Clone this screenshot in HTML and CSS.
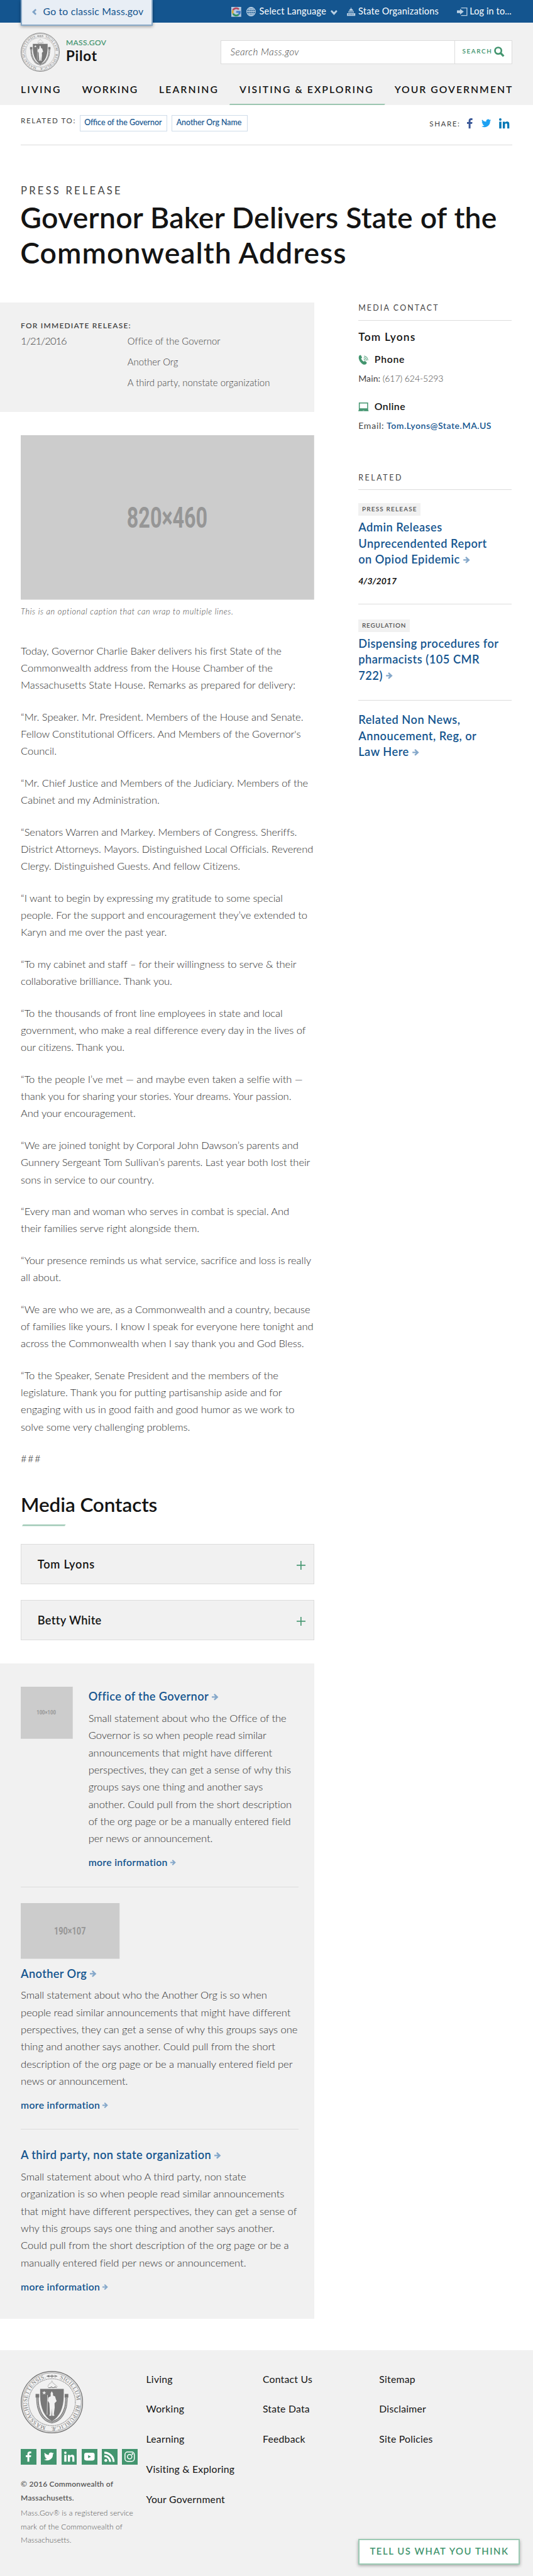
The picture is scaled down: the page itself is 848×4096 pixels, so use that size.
FILE: index.html
```html
<!DOCTYPE html>
<html lang="en">
<head>
<meta charset="utf-8">
<title>Governor Baker Delivers State of the Commonwealth Address</title>
<link rel="stylesheet" href="styles.css">
</head>
<body>
<svg width="0" height="0" class="defs">
  <defs>
    <symbol id="arrow" viewBox="0 0 13 13"><path d="M0 5.100h6.700L3.700 2 5.600 0l7 6.500-7 6.500-1.900-2 3-3.100H0z" fill="currentColor"/></symbol>
    <symbol id="fb" viewBox="0 0 20 20"><path d="M11.600 20v-9h3.100l.5-3.600h-3.600V5.200c0-1 .3-1.700 1.800-1.700h1.900V.2C15 .1 13.900 0 12.700 0 9.900 0 8 1.700 8 4.700v2.700H4.800V11H8v9z" fill="currentColor"/></symbol>
    <symbol id="tw" viewBox="0 0 24 20"><path d="M24 2.400c-.9.400-1.800.700-2.800.8 1-.6 1.800-1.600 2.200-2.700-1 .6-2 1-3.100 1.200A4.900 4.900 0 0 0 11.900 6.200C7.800 6 4.200 4 1.700.9.400 3.200 1 6 3.200 7.500c-.8 0-1.600-.2-2.200-.6 0 2.300 1.600 4.400 3.900 4.900-.7.200-1.500.200-2.200.1.600 2 2.400 3.400 4.600 3.400A9.900 9.900 0 0 1 0 17.300 14 14 0 0 0 21.500 4.900c1-.7 1.800-1.600 2.500-2.500z" fill="currentColor"/></symbol>
    <symbol id="li" viewBox="0 0 20 20"><path d="M.3 6.600h4.200V20H.3zM2.400 0a2.400 2.400 0 1 1 0 4.800 2.400 2.400 0 0 1 0-4.800zM7.200 6.600h4v1.900c.6-1.100 2-2.200 4-2.200 4.200 0 4.800 2.800 4.800 6.300V20h-4.200v-6.500c0-1.600 0-3.600-2.200-3.600s-2.300 1.700-2.300 3.500V20H7.200z" fill="currentColor"/></symbol>
    <symbol id="seal" viewBox="0 0 120 120">
      <g fill="none" stroke="#787878">
        <circle cx="60" cy="60" r="59" stroke-width="1.700"/>
        <circle cx="60" cy="60" r="56.500" stroke-width=".8"/>
        <circle cx="60" cy="60" r="45" stroke-width="1.300" stroke-dasharray="1.100 .8"/>
      </g>
      <path id="ring" d="M60 12.500A47.500 47.500 0 1 1 59.900 12.500" fill="none"/>
      <g class="seal-text">
        <text><textPath href="#ring" startOffset="15" textLength="56">SIGILLUM</textPath></text>
        <text><textPath href="#ring" startOffset="79" textLength="71">REIPUBLICÆ</textPath></text>
        <text><textPath href="#ring" startOffset="160" textLength="126">MASSACHUSETTENSIS.</textPath></text>
      </g>
      <path d="M49 10l6-2.500v5zM71 10l-6-2.500v5zM53 9.500h14v1H53z" fill="#787878"/>
      <circle cx="60" cy="10" r="2" fill="none" stroke="#787878" stroke-width="1.200"/>
      <path d="M52 31q1-6 6-8l2-4 2 4q5 4 9 8" fill="none" stroke="#c4c4c4" stroke-width="1.400"/>
      <path d="M53 32h4l2-1.500 2 1.500h3l2-1.500 3 1.500" fill="none" stroke="#787878" stroke-width="1.300"/>
      <path d="M37.300 34.500h45.400v12C82.700 71 75 88 60 96.500 45 88 37.300 71 37.300 46.500z" fill="#787878"/>
      <path d="M32 46q0 20 3 27 7 22 25 25.500Q78 95 85 73q3-7 3-27" fill="none" stroke="#787878" stroke-width="4.600"/>
      <path d="M32 50q0 16 3 23 7 22 25 25.500Q78 95 85 73q3-7 3-23" fill="none" stroke="#d6d6d6" stroke-width="2" stroke-dasharray="1.500 1.100"/>
      <path d="M28.500 44h7v7h-7zM84.500 44h7v7h-7z" fill="#787878"/>
      <path d="M45 38l1 2.700h2.900l-2.300 1.800.9 2.800-2.500-1.700-2.500 1.700.9-2.800-2.300-1.800H44z" fill="#f1f1f1"/>
      <path d="M57.500 43l2-4 2.500 4v4l4 2 1.500 5 1.500 4-4 4 .3 8-1.800 14h1v2h-4l-.5-14-1 14h-4v-2h1.300l-1.300-22-3-5 1-6 4.500-2.500z" fill="#f1f1f1"/>
      <path d="M51.500 46l-.8 38" stroke="#f1f1f1" stroke-width=".9"/>
    </symbol>
  </defs>
</svg>
<div class="page">

<div class="topbar">
  <a class="classic"><svg width="9" height="12" viewBox="0 0 9 12"><path d="M8.500 2.400 5 6l3.500 3.600L6.400 12 0 6 6.400 0z" fill="#7ea2c6"/></svg><span>Go to classic Mass.gov</span></a>
  <div class="utility">
    <svg class="google" width="19" height="19" viewBox="0 0 19 19"><rect width="19" height="19" fill="#b6cbe0"/><g fill="none" stroke-width="3.400"><path d="M14.600 4.700A7 7 0 0 0 3.300 6.300" stroke="#b5485d"/><path d="M3.300 6.300a7 7 0 0 0 0 6.600" stroke="#d3a63c"/><path d="M3.300 12.900a7 7 0 0 0 11 1.700" stroke="#2f9060"/><path d="M14.300 14.600a7 7 0 0 0 2-5H9.500" stroke="#3f78c8"/></g></svg>
    <svg class="globe" width="18" height="18" viewBox="0 0 18 18" fill="none" stroke="#b9cfe3" stroke-width="1.500"><circle cx="9" cy="9" r="8.200"/><ellipse cx="9" cy="9" rx="4" ry="8.200"/><path d="M9 1v16M1 9h16M2.200 4.800h13.600M2.200 13.200h13.600"/></svg>
    <span class="u-lang">Select Language</span>
    <svg class="u-chev" width="13" height="10" viewBox="0 0 13 10"><path d="M0 2.300 2.200 0l4.300 4.300L10.800 0 13 2.300 6.500 9.700z" fill="#b9cfe3"/></svg>
    <svg class="u-cap" width="16" height="16" viewBox="0 0 16 16"><path d="M7.500 0h1v2q3 .8 3.500 4H4q.5-3.200 3.500-4zM3 7h10v3H3zM0 11h16v5H0z" fill="#b9cfe3"/><path d="M5 8h1.200v2H5zM7.500 8h1.200v2H7.500zM10 8h1.200v2H10zM2 12.500h1.500v1.500H2zM5 12.500h1.500v1.500H5zM8 12.500h1.500v1.500H8zM11 12.500h1.500v1.500H11z" fill="#14558f"/></svg>
    <span class="u-org">State Organizations</span>
    <svg class="u-login" width="20" height="16" viewBox="0 0 20 16"><path d="M0 5.500h6V2.300L13 8l-7 5.700v-3.200H0z" fill="#b9cfe3"/><path d="M8 .8h11.200v14.400H8" fill="none" stroke="#b9cfe3" stroke-width="1.600"/></svg>
    <span class="u-log">Log in to...</span>
  </div>
</div>

<header class="header">
  <div class="brand-row">
    <svg width="75" height="75"><use href="#seal"/></svg>
    <div class="brand"><div class="brand-top">MASS.GOV</div><div class="brand-name">Pilot</div></div>
    <div class="search"><div class="search-input">Search Mass.gov</div><div class="search-btn"><span>SEARCH</span><svg width="20" height="20" viewBox="0 0 20 20"><circle cx="8" cy="8" r="6.200" fill="none" stroke="#43956f" stroke-width="3.200"/><path d="M12.300 12.300 18.500 18.500" stroke="#43956f" stroke-width="4"/></svg></div></div>
  </div>
  <nav class="nav">
    <a class="n1">LIVING</a><a class="n2">WORKING</a><a class="n3">LEARNING</a><a class="active">VISITING &amp; EXPLORING</a><a class="n5">YOUR GOVERNMENT</a>
  </nav>
</header>

<div class="related-bar">
  <span class="rel-label">RELATED TO:</span>
  <a class="tag tag-1">Office of the Governor</a><a class="tag tag-2">Another Org Name</a>
  <div class="share"><span>SHARE:</span>
    <svg class="s-fb" width="20" height="20"><use href="#fb"/></svg>
    <svg class="s-tw" width="18.500" height="17"><use href="#tw"/></svg>
    <svg class="s-li" width="20" height="20"><use href="#li"/></svg>
  </div>
</div>

<div class="kicker">PRESS RELEASE</div>
<h1>Governor Baker Delivers State of the<br><span>Commonwealth Address</span></h1>

<div class="columns">
<main>
  <section class="release">
    <div class="release-label">FOR IMMEDIATE RELEASE:</div>
    <div class="release-row"><div class="release-date">1/21/2016</div><div class="release-orgs">Office of the Governor<br>Another Org<br>A third party, nonstate organization</div></div>
  </section>
  <article>
    <svg class="photo" width="564" height="316"><rect width="564" height="316" fill="#ccc"/><text x="204" y="177.500" font-size="55" textLength="155" lengthAdjust="spacingAndGlyphs">820×460</text></svg>
    <div class="caption">This is an optional caption that can wrap to multiple lines.</div>
    <div class="body">
<p>Today, Governor Charlie Baker delivers his first State of the<br>Commonwealth address from the House Chamber of the<br>Massachusetts State House. Remarks as prepared for delivery:</p>
<p>“Mr. Speaker. Mr. President. Members of the House and Senate.<br>Fellow Constitutional Officers. And Members of the Governor's<br>Council.</p>
<p>“Mr. Chief Justice and Members of the Judiciary. Members of the<br>Cabinet and my Administration.</p>
<p>“Senators Warren and Markey. Members of Congress. Sheriffs.<br>District Attorneys. Mayors. Distinguished Local Officials. Reverend<br>Clergy. Distinguished Guests. And fellow Citizens.</p>
<p>“I want to begin by expressing my gratitude to some special<br>people. For the support and encouragement they’ve extended to<br>Karyn and me over the past year.</p>
<p>“To my cabinet and staff – for their willingness to serve &amp; their<br>collaborative brilliance. Thank you.</p>
<p>“To the thousands of front line employees in state and local<br>government, who make a real difference every day in the lives of<br>our citizens. Thank you.</p>
<p>“To the people I’ve met — and maybe even taken a selfie with —<br>thank you for sharing your stories. Your dreams. Your passion.<br>And your encouragement.</p>
<p>“We are joined tonight by Corporal John Dawson’s parents and<br>Gunnery Sergeant Tom Sullivan’s parents. Last year both lost their<br>sons in service to our country.</p>
<p>“Every man and woman who serves in combat is special. And<br>their families serve right alongside them.</p>
<p>“Your presence reminds us what service, sacrifice and loss is really<br>all about.</p>
<p>“We are who we are, as a Commonwealth and a country, because<br>of families like yours. I know I speak for everyone here tonight and<br>across the Commonwealth when I say thank you and God Bless.</p>
<p>“To the Speaker, Senate President and the members of the<br>legislature. Thank you for putting partisanship aside and for<br>engaging with us in good faith and good humor as we work to<br>solve some very challenging problems.</p>
<p class="hashes">###</p>
    </div>
    <h2>Media Contacts</h2>
    <svg class="h2-rule" width="84" height="3"><path d="M2 0h82l-2 3H0z" fill="#a0cab6"/></svg>
    <div class="accordion"><span class="ac-1">Tom Lyons</span><i class="plus"></i></div>
    <div class="accordion"><span class="ac-2">Betty White</span><i class="plus"></i></div>
  </article>
  <section class="orgs">
    <div class="org org-side">
      <svg class="thumb" width="100" height="100"><rect width="100" height="100" fill="#ccc"/><text x="30.500" y="53" font-size="10" textLength="37" lengthAdjust="spacingAndGlyphs">100×100</text></svg>
      <div>
        <h3>Office of the Governor<svg width="13" height="13"><use href="#arrow"/></svg></h3>
        <p>Small statement about who the Office of the<br>Governor is so when people read similar<br>announcements that might have different<br>perspectives, they can get a sense of why this<br>groups says one thing and another says<br>another. Could pull from the short description<br>of the org page or be a manually entered field<br>per news or announcement.</p>
        <a class="more">more information<svg width="11" height="11"><use href="#arrow"/></svg></a>
      </div>
    </div>
    <div class="org org-stack">
      <svg class="thumb" width="190" height="107"><rect width="190" height="107" fill="#ccc"/><text x="64" y="60" font-size="19" textLength="61" lengthAdjust="spacingAndGlyphs">190×107</text></svg>
      <h3>Another Org<svg width="13" height="13"><use href="#arrow"/></svg></h3>
      <p>Small statement about who the Another Org is so when<br>people read similar announcements that might have different<br>perspectives, they can get a sense of why this groups says one<br>thing and another says another. Could pull from the short<br>description of the org page or be a manually entered field per<br>news or announcement.</p>
      <a class="more">more information<svg width="11" height="11"><use href="#arrow"/></svg></a>
    </div>
    <div class="org org-last">
      <h3>A third party, non state organization<svg width="13" height="13"><use href="#arrow"/></svg></h3>
      <p>Small statement about who A third party, non state<br>organization is so when people read similar announcements<br>that might have different perspectives, they can get a sense of<br>why this groups says one thing and another says another.<br>Could pull from the short description of the org page or be a<br>manually entered field per news or announcement.</p>
      <a class="more">more information<svg width="11" height="11"><use href="#arrow"/></svg></a>
    </div>
  </section>
</main>

<aside>
  <div class="side-head">MEDIA CONTACT</div>
  <div class="person">Tom Lyons</div>
  <div class="method"><svg width="19" height="20" viewBox="0 0 19 20"><path d="M1.500 1.500 4.300.6l2.600 4.800-2 1.800q1.500 4 5.300 6.200l2-1.700 3.800 3.400-1 2.500q-2.500 2.400-6 1Q2 15 .4 7 0 3.500 1.500 1.500z" fill="#43956f"/><path d="M10 8.500a3 3 0 0 1 2.500 3M10 5.500a6 6 0 0 1 5.300 6M10.500 2.500a8.500 8.500 0 0 1 7.500 8.500" fill="none" stroke="#6fae90" stroke-width="1.500"/></svg><span>Phone</span></div>
  <div class="detail"><span class="main">Main:</span> <span class="num">(617) 624-5293</span></div>
  <div class="method online"><svg width="20" height="17" viewBox="0 0 20 17"><path d="M2 1h16v11H2z" fill="#fff" stroke="#43956f" stroke-width="1.800"/><path d="M1.500 12.500h17L20 16.500H0z" fill="#43956f"/><path d="M8.500 15h3v1.500h-3z" fill="#a0cab6"/></svg><span>Online</span></div>
  <div class="detail"><span class="em">Email:</span> <a>Tom.Lyons@State.MA.US</a></div>
  <div class="side-head second">RELATED</div>
  <div class="item"><div class="badge">PRESS RELEASE</div>
    <h4>Admin Releases<br>Unprecendented Report<br>on Opiod Epidemic<svg width="13.500" height="13"><use href="#arrow"/></svg></h4>
    <div class="date">4/3/2017</div></div>
  <div class="item item-2"><div class="badge badge-2">REGULATION</div>
    <h4>Dispensing procedures for<br>pharmacists (105 CMR<br>722)<svg width="13.500" height="13"><use href="#arrow"/></svg></h4></div>
  <div class="item item-3"><h4>Related Non News,<br>Annoucement, Reg, or<br>Law Here<svg width="13.500" height="13"><use href="#arrow"/></svg></h4></div>
</aside>
</div>

<footer class="footer">
  <div class="f-brand">
    <svg class="f-seal" width="120" height="120"><use href="#seal"/></svg>
    <div class="social">
      <a><svg width="20" height="20"><use href="#fb"/></svg></a>
      <a><svg width="19" height="17"><use href="#tw"/></svg></a>
      <a><svg width="20" height="20"><use href="#li"/></svg></a>
      <a><svg width="20" height="15" viewBox="0 0 20 15"><rect width="20" height="15" rx="4" fill="#fff"/><path d="M7.500 4.500v6L13 7.500z" fill="#43956f"/></svg></a>
      <a><svg width="20" height="20" viewBox="0 0 20 20"><circle cx="2.800" cy="17.200" r="2.800" fill="#fff"/><path d="M0 8.800A11.200 11.200 0 0 1 11.200 20M0 2.200A17.800 17.800 0 0 1 17.800 20" fill="none" stroke="#fff" stroke-width="3.800"/></svg></a>
      <a><svg width="20" height="20" viewBox="0 0 20 20" fill="none" stroke="#fff" stroke-width="1.800"><rect x="1" y="1" width="18" height="18" rx="5"/><circle cx="10" cy="10" r="4.300"/><circle cx="15.400" cy="4.700" r=".7"/></svg></a>
    </div>
    <div class="copy">© 2016 Commonwealth of<br>Massachusetts.</div>
    <div class="legal">Mass.Gov® is a registered service<br>mark of the Commonwealth of<br>Massachusetts.</div>
  </div>
  <div class="f-col c1">Living<br>Working<br>Learning<br>Visiting &amp; Exploring<br>Your Government</div>
  <div class="f-col c2">Contact Us<br>State Data<br>Feedback</div>
  <div class="f-col c3">Sitemap<br>Disclaimer<br>Site Policies</div>
  <a class="feedback">TELL US WHAT YOU THINK</a>
</footer>
</div>
</body>
</html>
```
FILE: styles.css
```css
* { box-sizing: border-box; }
body { margin: 0; height: 4096px; overflow: hidden; background: #fff; }
.defs { position: absolute; }
.page { zoom: .8276; width: 1024.6px; height: 4950px; overflow: hidden; font-family: Lato, "Open Sans", sans-serif; color: #141414; white-space: nowrap; }
svg { display: block; flex: none; overflow: visible; }
p, h1, h2, h3, h4 { margin: 0; }

.seal-text text { font: 11px "Liberation Serif", serif; fill: #787878; }

/* Utility bar */
.topbar { display: flex; height: 43px; background: #14558f; }
.classic { position: relative; z-index: 2; display: flex; margin-left: 40px; width: 254px; height: 49px; border: 3px solid #8aaac8; border-top: 0; background: #e8eef5; padding-left: 19px; color: #14558f; font-size: 19px; line-height: 44px; letter-spacing: .25px; box-shadow: 0 3px 6px rgba(0,0,0,.35); }
.classic svg { margin-top: 17px; margin-right: 12.5px; }
.utility { display: flex; margin-left: 151px; color: #fff; font-size: 17.5px; line-height: 44px; }
.google { margin-top: 13px; }
.globe { margin: 13px 6.5px 0 10px; }
.u-lang { width: 137.5px; letter-spacing: .3px; }
.u-chev { margin-top: 19px; }
.u-cap { margin: 15px 6px 0 18px; }
.u-org { width: 190px; letter-spacing: .25px; }
.u-login { margin: 15px 4px 0 0; }
.u-log { letter-spacing: .15px; }

/* Header */
.header { height: 159px; background: #f1f1f1; padding: 20px 40px 0; }
.brand-row { display: flex; height: 75px; }
.brand { margin: 11px 0 0 12px; }
.brand-top { font-size: 14.5px; line-height: 18px; letter-spacing: .45px; color: #43956f; -webkit-text-stroke: .25px #43956f; }
.brand-name { margin-top: 2px; font-size: 27px; font-weight: 700; line-height: 26px; letter-spacing: .9px; }
.search { display: flex; width: 560px; height: 46px; margin: 14px 0 0 auto; border: 2px solid #dcdcdc; background: #fff; }
.search-input { width: 449px; border-right: 2px solid #dcdcdc; padding-left: 17px; font-size: 18.5px; font-style: italic; font-weight: 300; line-height: 43px; letter-spacing: .5px; color: #444; }
.search-btn { display: flex; padding-left: 14px; font-size: 12px; font-weight: 600; line-height: 41px; letter-spacing: 1.9px; color: #43956f; }
.search-btn span { width: 61px; }
.search-btn svg { margin-top: 11px; }
.nav { display: flex; justify-content: space-between; margin-top: 21px; height: 43px; font-size: 19px; font-weight: 600; line-height: 24px; letter-spacing: 2.5px; }
.nav .n1, .nav .n3 { letter-spacing: 2.6px; }
.nav .n2 { letter-spacing: 2.1px; }
.nav .n5 { letter-spacing: 2.45px; margin-right: -2px; }
.active { position: relative; }
.active::after { content: ""; position: absolute; left: -20px; right: -22px; bottom: 0; height: 3px; background: #9bc5b0; clip-path: polygon(2px 0, 100% 0, calc(100% - 2px) 100%, 0 100%); }

.related-bar { display: flex; height: 77px; margin: 0 40px; padding-top: 19px; border-bottom: 1px solid #dcdcdc; }
.rel-label { width: 113px; padding-top: 1px; font-size: 14px; line-height: 20px; letter-spacing: 1.9px; color: #444; }
.tag { height: 32px; border: 2px solid #cfdce9; padding-left: 8px; font-size: 15px; line-height: 27px; color: #14558f; -webkit-text-stroke: .2px #14558f; }
.tag-1 { width: 169px; margin-right: 8px; }
.tag-2 { width: 146px; }
.share { display: flex; margin-left: auto; padding-top: 6px; padding-right: 5px; font-size: 14px; line-height: 22px; letter-spacing: 1.9px; color: #444; }
.s-fb { margin-left: 8px; color: #3b5998; }
.s-tw { margin: 2px 0 0 12px; color: #1da1f2; }
.s-li { margin-left: 16px; color: #0077b5; }

.kicker { margin: 76px 0 0 40px; font-size: 20px; line-height: 24px; letter-spacing: 3.9px; color: #444; }
h1 { margin: 4px 0 62px 39px; font-size: 56px; font-weight: 600; line-height: 68px; letter-spacing: .3px; }
h1 span { letter-spacing: 1.2px; }

.columns { display: flex; height: 3934px; }
main { width: 604px; }
.release { height: 210px; background: #f1f1f1; padding: 36px 0 0 40px; color: #444; }
.release-label { font-size: 14.5px; font-weight: 600; line-height: 18px; letter-spacing: 1.45px; }
.release-row { display: flex; }
.release-date { width: 205px; padding-top: 9.5px; font-size: 20px; font-weight: 300; line-height: 24px; letter-spacing: -1.2px; }
.release-orgs { padding-top: .5px; font-size: 18px; font-weight: 300; line-height: 40.1px; letter-spacing: .05px; }

article { padding-left: 40px; }
.photo { margin-top: 45px; }
.photo text, .thumb text { font-family: Roboto, sans-serif; font-weight: 700; fill: #969696; }
.caption { margin: 13px 0 49.6px; font-size: 15.5px; font-style: italic; font-weight: 300; line-height: 20px; letter-spacing: .78px; color: #444; }
.body p { margin-bottom: 28px; font-size: 20px; font-weight: 300; line-height: 33px; letter-spacing: -.09px; color: #303030; }
.body .hashes { margin-bottom: 0; letter-spacing: 1.6px; }
h2 { margin-top: 51px; font-size: 38px; font-weight: 600; line-height: 40px; letter-spacing: -.1px; }
.h2-rule { margin: 18.5px 0 35px 2px; }
.accordion { display: flex; justify-content: space-between; align-items: center; height: 77px; margin-bottom: 30.5px; border: 2px solid #dcdcdc; background: #f1f1f1; padding: 0 16px 0 31px; font-size: 22px; font-weight: 600; letter-spacing: .95px; }
.accordion:last-child { margin-bottom: 0; }
.ac-2 { letter-spacing: .45px; }
.plus { width: 17px; height: 17px; margin-top: 4px; background: linear-gradient(#43956f,#43956f) center/100% 2px no-repeat, linear-gradient(#43956f,#43956f) center/2px 100% no-repeat; }

.orgs { height: 1259px; margin-top: 44.4px; background: #f1f1f1; padding: 45px 30px 0 40px; }
.org h3 { font-size: 22px; font-weight: 600; line-height: 27px; letter-spacing: .48px; color: #14558f; }
h3 svg, h4 svg, .more svg { display: inline-block; margin-left: 6px; vertical-align: 1px; color: #85a8ca; }
.org p { margin-top: 12.6px; font-size: 20px; font-weight: 300; line-height: 33px; letter-spacing: -.07px; color: #303030; }
.more { display: block; margin-top: 17.6px; font-size: 19px; font-weight: 600; line-height: 22px; letter-spacing: .4px; color: #14558f; }
.more svg { margin-left: 5px; }
.org-side { display: flex; gap: 30px; height: 385px; border-bottom: 1px solid #dcdcdc; }
.org-side h3 { padding-top: 5px; }
.org-stack { height: 466px; border-bottom: 1px solid #dcdcdc; padding-top: 30px; }
.org-stack h3 { margin-top: 15px; }
.org-last { padding-top: 35px; }

/* Sidebar */
aside { width: 295px; margin-left: 85px; }
.side-head { height: 35px; border-bottom: 2px solid #dcdcdc; padding-top: 1.6px; font-size: 15px; line-height: 20px; letter-spacing: 2.6px; color: #444; }
.person { margin-top: 19.3px; font-size: 21px; font-weight: 600; line-height: 24px; letter-spacing: 1.5px; }
.method { display: flex; margin-top: 18.7px; font-size: 19px; font-weight: 600; line-height: 24px; letter-spacing: .9px; }
.method svg { width: 20px; margin: 3px 11px 0 0; }
.detail { margin-top: 13.4px; font-size: 17px; line-height: 24px; color: #444; }
.main { letter-spacing: .1px; }
.num { font-weight: 300; letter-spacing: -.1px; color: #444; }
.online { margin-top: 29.6px; letter-spacing: .6px; }
.online svg { margin-top: 5px; }
.em { letter-spacing: .9px; }
.detail a { font-weight: 600; letter-spacing: .65px; color: #14558f; }
.second { margin-top: 76.6px; letter-spacing: 3.1px; }
.item { height: 219px; border-bottom: 1px solid #dcdcdc; padding-top: 25px; }
.badge { width: 119px; height: 24px; background: #f1f1f1; padding-left: 7px; font-size: 12px; font-weight: 600; line-height: 24px; letter-spacing: 1.45px; color: #555; }
.badge-2 { width: 99px; letter-spacing: 1px; }
h4 { margin-top: 7.2px; font-size: 22px; font-weight: 600; line-height: 31px; letter-spacing: .62px; color: #14558f; }
.date { margin-top: 13px; font-size: 17px; font-style: italic; font-weight: 700; line-height: 24px; }
.item-2 { height: 185px; padding-top: 29px; }
.item-3 { border: 0; padding-top: 15px; }

/* Footer */
.footer { position: relative; display: flex; height: 440px; background: #f1f1f1; padding: 40px 0 0 40px; }
.f-brand { width: 241px; }
.social { display: flex; gap: 9px; margin-top: 30px; }
.social a { display: flex; align-items: center; justify-content: center; width: 30px; height: 30px; background: #43956f; color: #fff; }
.copy { margin-top: 24.8px; font-size: 14.5px; font-weight: 600; line-height: 26px; letter-spacing: .3px; color: #555; }
.legal { margin-top: 4px; font-size: 14.5px; font-weight: 300; line-height: 26px; letter-spacing: .16px; color: #555; }
.f-col { margin-top: -13.4px; font-size: 19px; line-height: 57.8px; letter-spacing: .32px; }
.c1 { width: 224px; }
.c2 { width: 224px; }
.feedback { position: absolute; right: 25px; top: 363px; width: 311px; height: 50px; border: 3px solid #9ccab4; background: #fff; padding-left: 20px; font-size: 18px; font-weight: 600; line-height: 43px; letter-spacing: 1.85px; color: #43956f; box-shadow: 0 3px 6px rgba(0,0,0,.35); }
```
